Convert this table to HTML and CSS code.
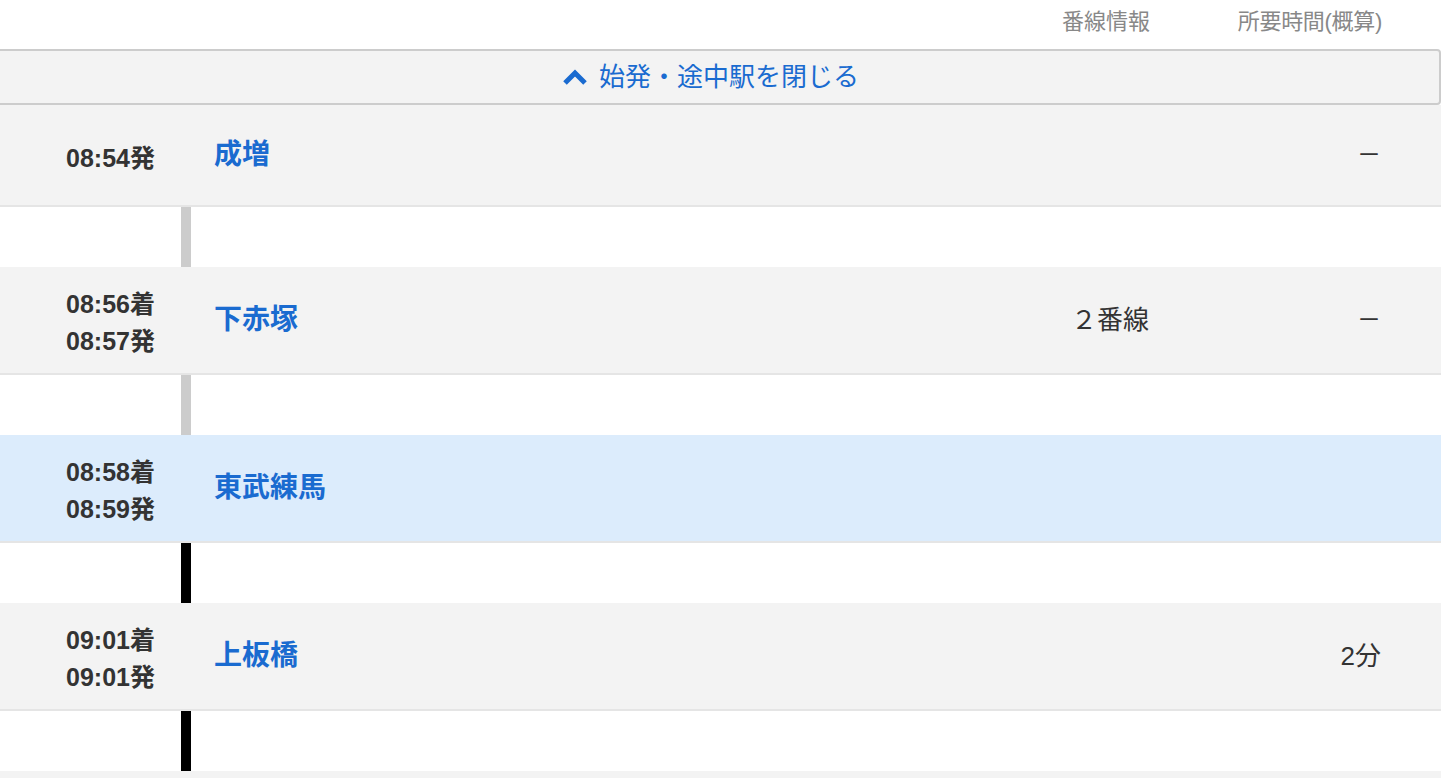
FILE: index.html
```html
<!DOCTYPE html>
<html lang="ja">
<head>
<meta charset="utf-8">
<title>停車駅</title>
<link rel="stylesheet" href="styles.css">
</head>
<body>
<div class="page">
  <div class="head">
    <span class="h-platform">番線情報</span>
    <span class="h-duration">所要時間(概算)</span>
  </div>
  <button class="toggle" type="button">
    <svg class="chev" width="26" height="16" viewBox="0 0 26 16"><polyline points="3,14 13,4 23,14" fill="none" stroke="#1a6bd0" stroke-width="5" stroke-linejoin="miter"/></svg>
    <span>始発・途中駅を閉じる</span>
  </button>

  <div class="row">
    <div class="time"><div>08:54発</div></div>
    <div class="name">成増</div>
    <div class="platform"></div>
    <div class="duration"><span class="dash">－</span></div>
  </div>
  <div class="link"><span class="bar gray"></span></div>

  <div class="row">
    <div class="time"><div>08:56着</div><div>08:57発</div></div>
    <div class="name">下赤塚</div>
    <div class="platform">２番線</div>
    <div class="duration"><span class="dash">－</span></div>
  </div>
  <div class="link"><span class="bar gray"></span></div>

  <div class="row current">
    <div class="time"><div>08:58着</div><div>08:59発</div></div>
    <div class="name">東武練馬</div>
    <div class="platform"></div>
    <div class="duration"></div>
  </div>
  <div class="link"><span class="bar black"></span></div>

  <div class="row">
    <div class="time"><div>09:01着</div><div>09:01発</div></div>
    <div class="name">上板橋</div>
    <div class="platform"></div>
    <div class="duration">2分</div>
  </div>
  <div class="link"><span class="bar black"></span></div>

  <div class="row-tail"></div>
</div>
</body>
</html>
```

FILE: styles.css
```css
* { box-sizing: border-box; }
html, body {
  margin: 0;
  padding: 0;
  background: #fff;
  overflow: hidden;
}
body {
  font-family: "Liberation Sans", "Noto Sans CJK JP", sans-serif;
  color: #333;
}
.page {
  width: 1441px;
}
.head {
  height: 49px;
  display: flex;
  justify-content: flex-end;
  align-items: center;
  padding: 0 59px 11px 0;
  font-size: 22px;
  color: #888;
}
.h-platform {
  margin-right: 1px;
}
.h-duration {
  width: 231px;
  text-align: right;
  letter-spacing: -0.3px;
}
.toggle {
  display: flex;
  width: 1461px;
  height: 56px;
  margin: 0 0 0 -20px;
  padding: 0;
  align-items: center;
  justify-content: center;
  gap: 11px;
  background: #f3f3f3;
  border: 2px solid #cccccc;
  border-radius: 4px;
  font-family: inherit;
  font-size: 26px;
  color: #1a6bd0;
}
.toggle span { line-height: 1; }
.chev { display: block; }
.row {
  display: flex;
  align-items: center;
  min-height: 102px;
  padding: 16px 60px 16px 0;
  background: #f3f3f3;
  border-bottom: 2px solid #e5e5e5;
}
.row.current { background: #dcecfc; }
.time {
  width: 155px;
  text-align: right;
  font-weight: bold;
  font-size: 25px;
  line-height: 37px;
  color: #333;
  padding-top: 3px;
  margin-bottom: -3px;
}
.name {
  flex: 1;
  margin-left: 59px;
  font-weight: bold;
  font-size: 28px;
  line-height: 1;
  padding-bottom: 1px;
  color: #1a6bd0;
}
.platform {
  font-size: 26px;
  color: #333;
  padding-bottom: 6px;
}
.duration {
  width: 232px;
  text-align: right;
  font-size: 26px;
  color: #333;
  padding-bottom: 6px;
}
.dash {
  font-family: "Noto Sans CJK JP", sans-serif;
  font-size: 24px;
}
.link {
  height: 60px;
  display: flex;
  background: #fff;
}
.bar {
  width: 10px;
  margin-left: 181px;
}
.bar.gray { background: #cccccc; }
.bar.black { background: #000; }
.row-tail {
  height: 20px;
  background: #f3f3f3;
}
```
